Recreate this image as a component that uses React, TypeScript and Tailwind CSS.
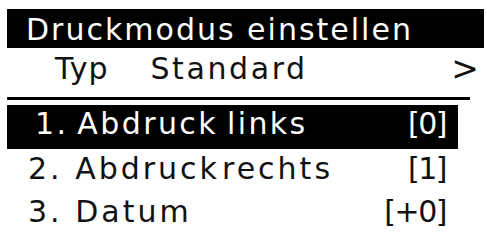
export default function App() {
  const font = { fontFamily: '"DejaVu Sans", sans-serif' };
  return (
    <div className="w-[487px] h-[240px] bg-white pt-[9px] pl-[7px] text-[#111] overflow-hidden text-[30px] leading-none" style={font}>
      <div className="h-[39px] w-[477px] bg-black text-white pl-[19px] pt-[6px] tracking-[2px]">
        Druckmodus einstellen
      </div>
      <div className="h-[49px] w-[470px] flex items-start pt-[6px]">
        <span className="ml-[48px] tracking-[1px]">Typ</span>
        <span className="ml-[42px] tracking-[2.6px]">Standard</span>
        <span className="ml-auto text-[33px] -mt-[2px] -mr-[2px]">&gt;</span>
      </div>
      <div className="h-[3px] w-[463px] bg-black" />
      <div className="mt-[5px] h-[44px] w-[451px] bg-black text-white flex items-start justify-between pl-[28px] pr-[12px] pt-[4px]">
        <span className="tracking-[2.4px] [word-spacing:-3px]">1. Abdruck links</span>
        <span className="tracking-[-1.5px]">[0]</span>
      </div>
      <div className="h-[42px] w-[451px] flex items-start justify-between pl-[21px] pr-[12px] pt-[5px]">
        <span className="tracking-[3px]">
          2. Abdruck<span className="ml-[2px]">rechts</span>
        </span>
        <span className="tracking-[-1.5px]">[1]</span>
      </div>
      <div className="h-[40px] w-[451px] flex items-start justify-between pl-[21px] pr-[12px] pt-[6px]">
        <span className="tracking-[3px]">3. Datum</span>
        <span className="tracking-[-1.5px]">[+0]</span>
      </div>
    </div>
  );
}
